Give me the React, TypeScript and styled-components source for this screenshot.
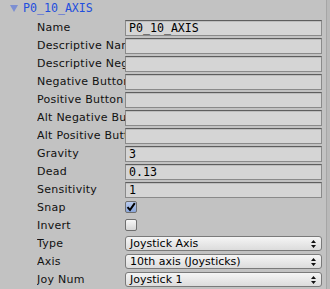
import styled, { createGlobalStyle } from 'styled-components';

const GlobalStyle = createGlobalStyle`
    html, body {
        margin: 0;
        padding: 0;
        background: #c2c2c2;
    }
`;

type Field =
    | { label: string; kind: 'text'; value: string }
    | { label: string; kind: 'check'; value: boolean }
    | { label: string; kind: 'popup'; value: string };

const fields: Field[] = [
    { label: 'Name', kind: 'text', value: 'P0_10_AXIS' },
    { label: 'Descriptive Name', kind: 'text', value: '' },
    { label: 'Descriptive Negative Name', kind: 'text', value: '' },
    { label: 'Negative Button', kind: 'text', value: '' },
    { label: 'Positive Button', kind: 'text', value: '' },
    { label: 'Alt Negative Button', kind: 'text', value: '' },
    { label: 'Alt Positive Button', kind: 'text', value: '' },
    { label: 'Gravity', kind: 'text', value: '3' },
    { label: 'Dead', kind: 'text', value: '0.13' },
    { label: 'Sensitivity', kind: 'text', value: '1' },
    { label: 'Snap', kind: 'check', value: true },
    { label: 'Invert', kind: 'check', value: false },
    { label: 'Type', kind: 'popup', value: 'Joystick Axis' },
    { label: 'Axis', kind: 'popup', value: '10th axis (Joysticks)' },
    { label: 'Joy Num', kind: 'popup', value: 'Joystick 1' },
];

export default function App() {
    return (
        <>
            <GlobalStyle />
            <Inspector>
                <Content>
                    <Foldout>
                        <Arrow viewBox="0 0 8 7">
                            <path d="M0 0 H8 L4 7 Z" fill="#7d8fd2" />
                        </Arrow>
                        <FoldoutTitle>P0_10_AXIS</FoldoutTitle>
                    </Foldout>
                    {fields.map((f) => (
                        <Row key={f.label}>
                            <Label>{f.label}</Label>
                            {f.kind === 'text' && <TextField>{f.value}</TextField>}
                            {f.kind === 'check' && (
                                <Checkbox $checked={f.value}>
                                    {f.value && (
                                        <svg width="10" height="10" viewBox="0 0 10 10">
                                            <path d="M1.5 5.2 L4 8 L8.8 1.2" stroke="#000" strokeWidth="2" fill="none" />
                                        </svg>
                                    )}
                                </Checkbox>
                            )}
                            {f.kind === 'popup' && (
                                <Popup>
                                    <span>{f.value}</span>
                                    <svg width="5" height="8" viewBox="0 0 5 8">
                                        <path d="M0 3 L2.5 0 L5 3 Z M0 5 L2.5 8 L5 5 Z" fill="#111" />
                                    </svg>
                                </Popup>
                            )}
                        </Row>
                    ))}
                </Content>
                <ScrollEdge />
            </Inspector>
        </>
    );
}

const Inspector = styled.div`
    width: 330px;
    height: 289px;
    display: flex;
    overflow: hidden;
    background: #c2c2c2;
`;

const Content = styled.div`
    width: 326px;
    display: flex;
    flex-direction: column;
`;

const ScrollEdge = styled.div`
    width: 3px;
    border-left: 1px solid #a6a6a6;
    background: #b9b9b9;
`;

const Foldout = styled.div`
    height: 18px;
    display: flex;
    align-items: center;
    padding-left: 10px;
    gap: 5px;
`;

const Arrow = styled.svg`
    width: 8px;
    height: 7px;
    margin-top: -1px;
`;

const FoldoutTitle = styled.span`
    font-family: 'DejaVu Sans Mono', monospace;
    font-size: 11.6px;
    color: #1f4fde;
    line-height: 1;
`;

const Row = styled.div`
    height: 18px;
    display: grid;
    grid-template-columns: 88px 197px;
    align-items: center;
    padding-left: 37px;
`;

const Label = styled.span`
    font-family: 'DejaVu Sans', sans-serif;
    font-size: 11px;
    letter-spacing: 0.25px;
    color: #111;
    white-space: nowrap;
    overflow: hidden;
`;

const TextField = styled.div`
    box-sizing: border-box;
    height: 16px;
    margin-top: 1px;
    padding: 0 3px;
    display: flex;
    align-items: center;
    font-family: 'DejaVu Sans Mono', monospace;
    font-size: 11.6px;
    color: #000;
    background: #d5d5d5;
    border: 1px solid #8a8a8a;
    border-top-color: #5e5e5e;
    box-shadow: inset 0 1px 0 #bdbdbd;
`;

const Checkbox = styled.div<{ $checked: boolean }>`
    box-sizing: border-box;
    width: 12px;
    height: 12px;
    display: flex;
    align-items: center;
    justify-content: center;
    border: 1px solid #6f6f6f;
    border-radius: 2px;
    background: ${({ $checked }) =>
        $checked ? 'linear-gradient(#b9cbee, #8aa6da)' : 'linear-gradient(#f7f7f7, #d6d6d6)'};
`;

const Popup = styled.div`
    box-sizing: border-box;
    height: 15px;
    margin-top: 1px;
    padding: 0 5px 0 4px;
    display: flex;
    align-items: center;
    justify-content: space-between;
    font-family: 'DejaVu Sans', sans-serif;
    font-size: 11px;
    color: #000;
    border: 1px solid #7a7a7a;
    border-radius: 3px;
    background: linear-gradient(#f5f5f5, #dcdcdc);
`;
